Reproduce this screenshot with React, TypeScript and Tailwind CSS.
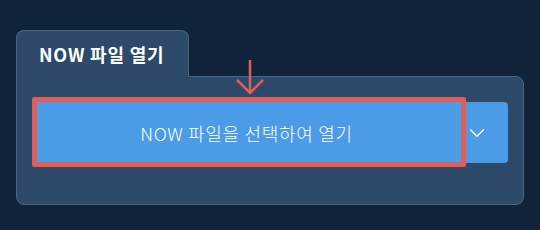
import { ChevronDown } from 'lucide-react'

const font = { fontFamily: '"Noto Sans CJK KR", "Noto Sans", sans-serif' }

export default function App() {
  return (
    <div className="w-[540px] h-[230px] bg-[#10233a] pl-4 pt-[30px]" style={font}>
      <div className="w-[508px]">
        {/* Tab */}
        <div className="relative z-10 -mb-px w-[173px] h-[47px] rounded-t-[8px] border border-b-0 border-[#4a6584] bg-[#2d4a6a] flex items-center pl-[22px]">
          <span className="text-[18px] font-bold text-white tracking-[0.8px]">NOW 파일 열기</span>
        </div>

        {/* Panel */}
        <div className="relative rounded-b-[8px] rounded-tr-[8px] border border-[#4a6584] bg-[#2d4a6a] px-[15px] pt-[25px] pb-[41px]">
          {/* Arrow pointing at button */}
          <svg
            className="absolute left-[218px] top-[-17px]"
            width="30"
            height="36"
            viewBox="0 0 30 36"
            fill="none"
            stroke="#e05d59"
            strokeWidth="2.5"
          >
            <path d="M15 0 V33" />
            <path d="M2 20 L15 33 L28 20" />
          </svg>

          <div className="relative flex h-[61px] rounded-[4px] bg-[#4c9be7]">
            <button className="flex-1 flex items-center justify-center text-white text-[18px] font-light tracking-[0.7px] pt-px">
              NOW 파일을 선택하여 열기
            </button>
            <button className="w-[47px] flex items-center pl-[3px] text-white">
              <ChevronDown size={26} strokeWidth={1.3} />
            </button>
            {/* highlight */}
            <div className="absolute left-0 top-[-5px] w-[434px] h-[70px] border-[5px] border-[#df5e5a] rounded-[2px] pointer-events-none" />
          </div>
        </div>
      </div>
    </div>
  )
}
